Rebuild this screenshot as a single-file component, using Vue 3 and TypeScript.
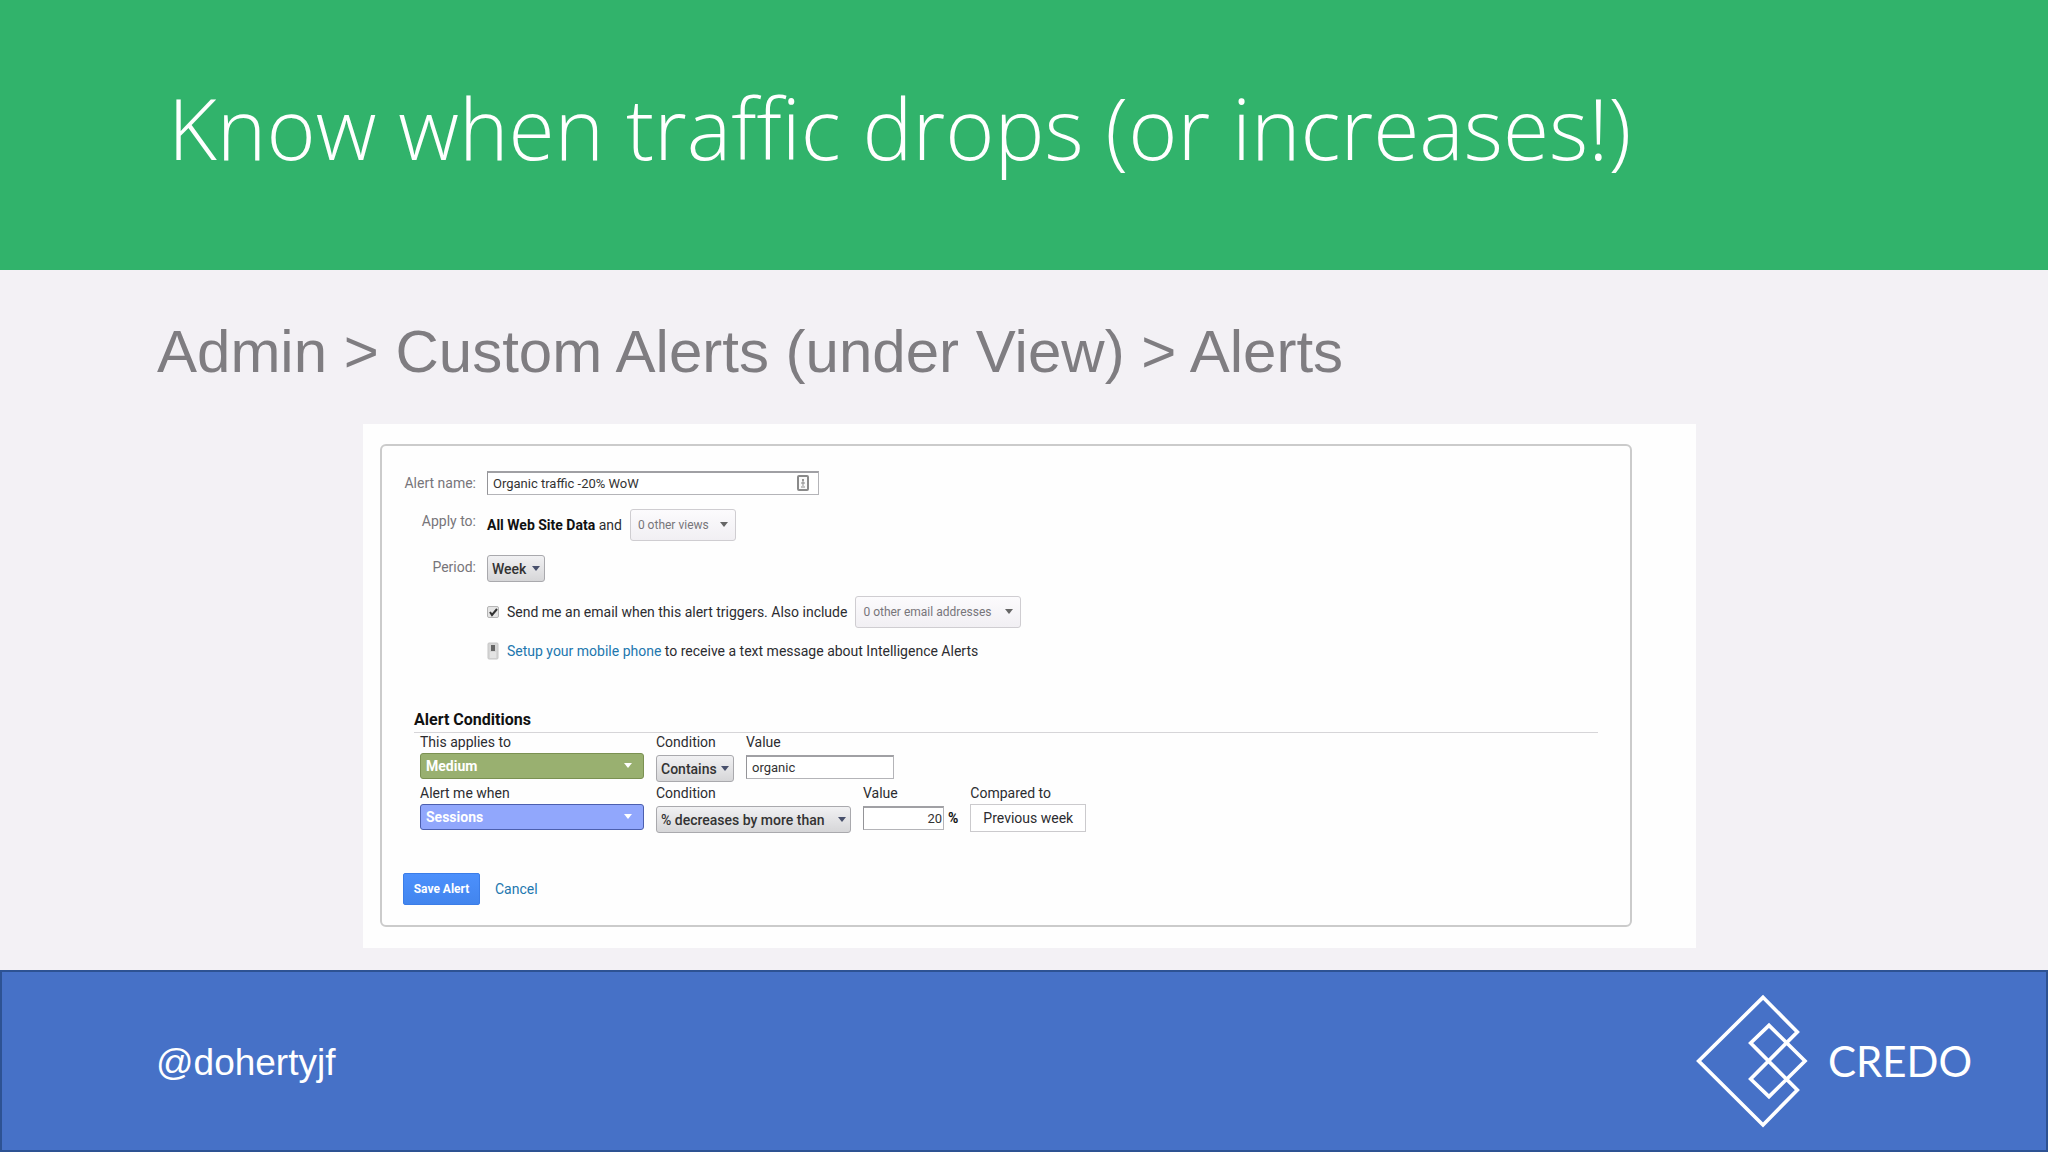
<script setup lang="ts">
import { ref } from 'vue'

const alertName = ref('Organic traffic -20% WoW')
const sendEmail = ref(true)
const dimensionValue = ref('organic')
const threshold = ref('20')
</script>

<template>
  <div class="slide">
    <header class="banner">
      <h1>Know when traffic drops (or increases!)</h1>
    </header>

    <main class="body">
      <h2>Admin &gt; Custom Alerts (under View) &gt; Alerts</h2>

      <div class="card">
        <form class="alert-form" @submit.prevent>
          <div class="fields">
            <label class="field-label" for="alert-name">Alert name:</label>
            <div class="name-box">
              <input id="alert-name" v-model="alertName" class="text-input" type="text" />
              <svg class="contact-icon" viewBox="0 0 12 16" aria-hidden="true">
                <rect x="1" y="1" width="10" height="14" rx="1" fill="#fafafa" stroke="#8a8a8a" stroke-width="2" />
                <circle cx="6" cy="5" r="1" fill="#777" />
                <path d="M4 8h4M6 6v5M4 12h4" stroke="#8a8a8a" stroke-width="1" fill="none" />
              </svg>
            </div>

            <label class="field-label" for="other-views">Apply to:</label>
            <div class="line tall">
              <span><strong>All Web Site Data</strong> and</span>
              <span class="drop light views">
                <select id="other-views"><option>0 other views</option></select>
              </span>
            </div>

            <label class="field-label" for="period">Period:</label>
            <div class="line">
              <span class="drop grey week">
                <select id="period"><option>Week</option></select>
              </span>
            </div>

            <div class="line tall indented">
              <input id="send-email" v-model="sendEmail" class="tick" type="checkbox" />
              <label for="send-email">Send me an email when this alert triggers. Also include</label>
              <span class="drop light emails">
                <select aria-label="Other email addresses"><option>0 other email addresses</option></select>
              </span>
            </div>

            <div class="line indented">
              <svg class="phone-icon" viewBox="0 0 12 18" aria-hidden="true">
                <rect x="1" y="1" width="10" height="16" rx="1" fill="#d6d6d6" stroke="#c6c6c6" />
                <rect x="4" y="3" width="4" height="6" fill="#666" />
                <path d="M3 11h6M3 13h6M3 15h6" stroke="#f2f2f2" />
              </svg>
              <span><a href="#">Setup your mobile phone</a> to receive a text message about Intelligence Alerts</span>
            </div>
          </div>

          <section class="conditions">
            <h3>Alert Conditions</h3>
            <div class="condition-row">
              <div class="group">
                <label for="dimension">This applies to</label>
                <span class="drop filled green">
                  <select id="dimension"><option>Medium</option></select>
                </span>
              </div>
              <div class="group plain">
                <label for="match">Condition</label>
                <span class="drop grey contains">
                  <select id="match"><option>Contains</option></select>
                </span>
              </div>
              <div class="group plain">
                <label for="dimension-value">Value</label>
                <input id="dimension-value" v-model="dimensionValue" class="text-input organic" type="text" />
              </div>
            </div>
            <div class="condition-row">
              <div class="group">
                <label for="metric">Alert me when</label>
                <span class="drop filled blue">
                  <select id="metric"><option>Sessions</option></select>
                </span>
              </div>
              <div class="group plain">
                <label for="change">Condition</label>
                <span class="drop grey change">
                  <select id="change"><option>% decreases by more than</option></select>
                </span>
              </div>
              <div class="group plain">
                <label for="threshold">Value</label>
                <div class="percent">
                  <input id="threshold" v-model="threshold" class="text-input amount" type="text" />
                  <strong>%</strong>
                </div>
              </div>
              <div class="group">
                <label for="compared">Compared to</label>
                <output id="compared" class="compared">Previous week</output>
              </div>
            </div>
          </section>

          <div class="actions">
            <button class="save" type="submit">Save Alert</button>
            <a href="#">Cancel</a>
          </div>
        </form>
      </div>
    </main>

    <footer class="footer">
      <span class="handle">@dohertyjf</span>
      <div class="brand">
        <svg class="mark" viewBox="106 102 336 402" aria-hidden="true">
          <path
            d="M307 112L114 303L307 495L410 390L270 249L325 196L433 303L325 410L270 357L410 216Z"
            fill="none"
            stroke="#fff"
            stroke-width="11"
          />
        </svg>
        <span class="wordmark">CREDO</span>
      </div>
    </footer>
  </div>
</template>

<style>
body {
  margin: 0;
}
</style>

<style scoped>
* {
  box-sizing: border-box;
}

.slide {
  display: flex;
  flex-direction: column;
  min-height: 100vh;
  background: #f3f1f5;
  font-family: Roboto, "Liberation Sans", sans-serif;
}

.banner {
  padding: 72px 168px 86px;
  background: #31b36b;
}

h1 {
  margin: 0;
  color: #fff;
  font: 300 84px/112px "Open Sans", sans-serif;
}

.body {
  flex: 1;
  padding: 47px 352px 20px 363px;
}

h2 {
  margin: 0 0 37px -206px;
  color: #7f7d81;
  font: 400 60px/70px "Helvetica Neue", "Liberation Sans", sans-serif;
}

.card {
  padding: 20px 64px 21px 17px;
  background: #fefefe;
}

.alert-form {
  padding: 25px 32px 20px 21px;
  border: 2px solid #cbcbcb;
  border-radius: 6px;
  color: #2c2c30;
  font-size: 14px;
  line-height: 18px;
}

.fields {
  display: grid;
  grid-template-columns: 73px 1fr;
  gap: 14px 11px;
}

.field-label {
  padding-top: 2px;
  color: #77757a;
  line-height: 20px;
  text-align: right;
  white-space: nowrap;
}

.name-box {
  display: flex;
  position: relative;
  width: 332px;
}

.text-input {
  height: 24px;
  padding: 0 5px;
  border: 1px solid #b4b4b8;
  border-top: 2px solid #a0a0a4;
  border-left-color: #949498;
  outline: 0;
  background: #fff;
  color: #333;
  font: 400 13px/18px Roboto, sans-serif;
}

.name-box .text-input {
  width: 100%;
}

.contact-icon {
  position: absolute;
  top: 4px;
  right: 10px;
  width: 12px;
  height: 16px;
}

.line {
  display: flex;
  align-items: center;
  gap: 8px;
  white-space: nowrap;
}

.tall {
  height: 32px;
}

.indented {
  grid-column: 2;
}

strong {
  color: #111;
  font-weight: 700;
}

a {
  color: #2277ae;
  text-decoration: none;
}

.drop {
  display: inline-flex;
  position: relative;
}

.drop select {
  width: 100%;
  padding: 0 4px;
  border: 1px solid #a9a9ad;
  border-radius: 3px;
  outline: 0;
  appearance: none;
  color: #333;
  font: 400 14px/18px Roboto, sans-serif;
}

.drop::after {
  position: absolute;
  top: 50%;
  right: 5px;
  margin-top: -3px;
  border: 4px solid transparent;
  border-top: 5px solid #48506c;
  border-bottom: 0;
  content: "";
  pointer-events: none;
}

.light select {
  height: 32px;
  padding: 0 7px;
  border-color: #cfcdd1;
  background: linear-gradient(#fcfbfd, #f1eff3);
  color: #77757a;
  font-size: 12px;
}

.light::after {
  right: 8px;
  border-top-color: #666;
}

.grey select {
  height: 27px;
  background: linear-gradient(#f1f1f3, #d6d6d8);
  font-weight: 500;
}

.views {
  width: 106px;
}

.week {
  width: 58px;
}

.emails {
  width: 166px;
}

.contains {
  width: 78px;
}

.change {
  width: 195px;
}

.tick {
  width: 12px;
  height: 12px;
  margin: 0;
  border: 1px solid #b5b5b5;
  border-radius: 2px;
  appearance: none;
  background: #e4e4e4;
}

.tick:checked {
  background: #e4e4e4 url("data:image/svg+xml,%3Csvg xmlns='http://www.w3.org/2000/svg' viewBox='0 0 10 10'%3E%3Cpath d='M2 5l2 3 5-6' fill='none' stroke='%23333' stroke-width='2'/%3E%3C/svg%3E") center / 10px 10px no-repeat;
}

.phone-icon {
  width: 12px;
  height: 18px;
}

.conditions {
  margin: 50px 0 0 11px;
}

h3 {
  margin: 0;
  padding-bottom: 2px;
  border-bottom: 1px solid #d6d5d8;
  color: #111;
  font-size: 16px;
  font-weight: 700;
  line-height: 20px;
}

.condition-row {
  display: flex;
  gap: 12px;
  height: 48px;
  margin: 0 0 3px 6px;
}

.group {
  display: flex;
  flex-direction: column;
  gap: 2px;
}

.plain {
  gap: 4px;
}

.filled {
  width: 224px;
}

.filled select {
  height: 26px;
  padding: 0 5px;
  color: #fff;
  font-weight: 700;
}

.filled::after {
  right: 12px;
  border-top-color: #fff;
}

.green select {
  border-color: #7b9152;
  background: #99b070;
}

.blue select {
  border-color: #4c5fae;
  background: #91a7fc;
}

.organic {
  width: 148px;
}

.percent {
  display: flex;
  align-items: center;
  gap: 4px;
}

.amount {
  width: 81px;
  padding: 0 1px;
  text-align: right;
}

.compared {
  height: 28px;
  padding: 0 12px;
  border: 1px solid #cbcacd;
  background: #fff;
  line-height: 26px;
}

.actions {
  display: flex;
  align-items: center;
  gap: 15px;
  margin-top: 41px;
}

.save {
  width: 77px;
  height: 32px;
  padding: 0;
  border: 1px solid #3b7de8;
  border-radius: 2px;
  background: linear-gradient(#4c90fc, #4285ee);
  color: #fff;
  font: 700 12px/18px Roboto, sans-serif;
}

.footer {
  display: flex;
  align-items: center;
  justify-content: space-between;
  height: 182px;
  padding: 0 66px 0 154px;
  border: 2px solid #2d5293;
  background: #4671c7;
  color: #fff;
}

.handle {
  padding-top: 4px;
  font: 400 37px/44px "Helvetica Neue", "Liberation Sans", sans-serif;
}

.brand {
  display: flex;
  align-items: center;
  gap: 20px;
}

.mark {
  width: 112px;
  height: 134px;
}

.wordmark {
  width: 152px;
  font: 400 42px/48px Lato, sans-serif;
}
</style>
